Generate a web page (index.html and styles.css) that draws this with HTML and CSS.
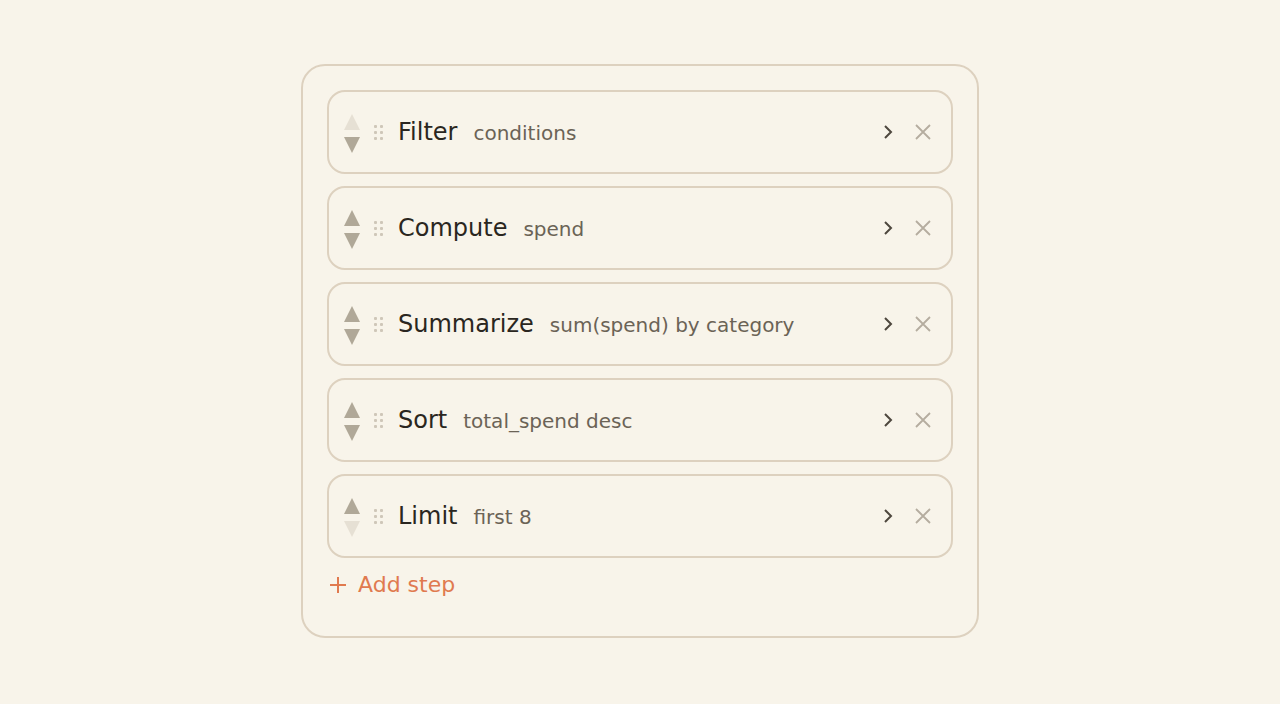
FILE: index.html
```html
<!DOCTYPE html>
<html lang="en">
<head>
    <meta charset="UTF-8">
    <meta name="viewport" content="width=device-width, initial-scale=1.0">
    <title>Pipeline steps</title>
    <link rel="stylesheet" href="styles.css">
</head>
<body>
    <div class="pipeline">
        <div class="step-list">
            <!-- Filter -->
            <div class="step">
                <div class="order">
                    <svg width="16" height="40" viewBox="0 0 16 40">
                        <polygon class="off" points="0,16 8,0 16,16"/>
                        <polygon points="0,23 16,23 8,39"/>
                    </svg>
                </div>
                <svg class="grip" width="9" height="15" viewBox="0 0 9 15">
                    <rect x="0" y="0" width="3" height="3" rx="1"/><rect x="6" y="0" width="3" height="3" rx="1"/>
                    <rect x="0" y="6" width="3" height="3" rx="1"/><rect x="6" y="6" width="3" height="3" rx="1"/>
                    <rect x="0" y="12" width="3" height="3" rx="1"/><rect x="6" y="12" width="3" height="3" rx="1"/>
                </svg>
                <span class="step-name">Filter</span>
                <span class="step-detail">conditions</span>
                <div class="step-actions">
                    <svg class="open" width="10" height="16" viewBox="0 0 10 16"><polyline points="2,2 8,8 2,14"/></svg>
                    <svg class="remove" width="16" height="16" viewBox="0 0 16 16"><path d="M1 1 L15 15 M15 1 L1 15"/></svg>
                </div>
            </div>

            <!-- Compute -->
            <div class="step">
                <div class="order">
                    <svg width="16" height="40" viewBox="0 0 16 40">
                        <polygon points="0,16 8,0 16,16"/>
                        <polygon points="0,23 16,23 8,39"/>
                    </svg>
                </div>
                <svg class="grip" width="9" height="15" viewBox="0 0 9 15">
                    <rect x="0" y="0" width="3" height="3" rx="1"/><rect x="6" y="0" width="3" height="3" rx="1"/>
                    <rect x="0" y="6" width="3" height="3" rx="1"/><rect x="6" y="6" width="3" height="3" rx="1"/>
                    <rect x="0" y="12" width="3" height="3" rx="1"/><rect x="6" y="12" width="3" height="3" rx="1"/>
                </svg>
                <span class="step-name">Compute</span>
                <span class="step-detail">spend</span>
                <div class="step-actions">
                    <svg class="open" width="10" height="16" viewBox="0 0 10 16"><polyline points="2,2 8,8 2,14"/></svg>
                    <svg class="remove" width="16" height="16" viewBox="0 0 16 16"><path d="M1 1 L15 15 M15 1 L1 15"/></svg>
                </div>
            </div>

            <!-- Summarize -->
            <div class="step">
                <div class="order">
                    <svg width="16" height="40" viewBox="0 0 16 40">
                        <polygon points="0,16 8,0 16,16"/>
                        <polygon points="0,23 16,23 8,39"/>
                    </svg>
                </div>
                <svg class="grip" width="9" height="15" viewBox="0 0 9 15">
                    <rect x="0" y="0" width="3" height="3" rx="1"/><rect x="6" y="0" width="3" height="3" rx="1"/>
                    <rect x="0" y="6" width="3" height="3" rx="1"/><rect x="6" y="6" width="3" height="3" rx="1"/>
                    <rect x="0" y="12" width="3" height="3" rx="1"/><rect x="6" y="12" width="3" height="3" rx="1"/>
                </svg>
                <span class="step-name">Summarize</span>
                <span class="step-detail">sum(spend) by category</span>
                <div class="step-actions">
                    <svg class="open" width="10" height="16" viewBox="0 0 10 16"><polyline points="2,2 8,8 2,14"/></svg>
                    <svg class="remove" width="16" height="16" viewBox="0 0 16 16"><path d="M1 1 L15 15 M15 1 L1 15"/></svg>
                </div>
            </div>

            <!-- Sort -->
            <div class="step">
                <div class="order">
                    <svg width="16" height="40" viewBox="0 0 16 40">
                        <polygon points="0,16 8,0 16,16"/>
                        <polygon points="0,23 16,23 8,39"/>
                    </svg>
                </div>
                <svg class="grip" width="9" height="15" viewBox="0 0 9 15">
                    <rect x="0" y="0" width="3" height="3" rx="1"/><rect x="6" y="0" width="3" height="3" rx="1"/>
                    <rect x="0" y="6" width="3" height="3" rx="1"/><rect x="6" y="6" width="3" height="3" rx="1"/>
                    <rect x="0" y="12" width="3" height="3" rx="1"/><rect x="6" y="12" width="3" height="3" rx="1"/>
                </svg>
                <span class="step-name">Sort</span>
                <span class="step-detail">total_spend desc</span>
                <div class="step-actions">
                    <svg class="open" width="10" height="16" viewBox="0 0 10 16"><polyline points="2,2 8,8 2,14"/></svg>
                    <svg class="remove" width="16" height="16" viewBox="0 0 16 16"><path d="M1 1 L15 15 M15 1 L1 15"/></svg>
                </div>
            </div>

            <!-- Limit -->
            <div class="step">
                <div class="order">
                    <svg width="16" height="40" viewBox="0 0 16 40">
                        <polygon points="0,16 8,0 16,16"/>
                        <polygon class="off" points="0,23 16,23 8,39"/>
                    </svg>
                </div>
                <svg class="grip" width="9" height="15" viewBox="0 0 9 15">
                    <rect x="0" y="0" width="3" height="3" rx="1"/><rect x="6" y="0" width="3" height="3" rx="1"/>
                    <rect x="0" y="6" width="3" height="3" rx="1"/><rect x="6" y="6" width="3" height="3" rx="1"/>
                    <rect x="0" y="12" width="3" height="3" rx="1"/><rect x="6" y="12" width="3" height="3" rx="1"/>
                </svg>
                <span class="step-name">Limit</span>
                <span class="step-detail">first 8</span>
                <div class="step-actions">
                    <svg class="open" width="10" height="16" viewBox="0 0 10 16"><polyline points="2,2 8,8 2,14"/></svg>
                    <svg class="remove" width="16" height="16" viewBox="0 0 16 16"><path d="M1 1 L15 15 M15 1 L1 15"/></svg>
                </div>
            </div>
        </div>

        <!-- 新增步驟 -->
        <div class="add-step">
            <svg width="16" height="16" viewBox="0 0 16 16"><path d="M8 0 V16 M0 8 H16"/></svg>
            <span>Add step</span>
        </div>
    </div>
</body>
</html>
```

FILE: styles.css
```css
body {
    margin: 0;
    padding: 0;
    font-family: "DejaVu Sans", "Noto Sans", sans-serif;
    background-color: #f8f4ea;
    display: flex;
    justify-content: center;
    align-items: center;
    height: calc(100vh - 2px);
    overflow: hidden;
}

/* 外框 */
.pipeline {
    width: 626px;
    padding: 24px 24px 38px 24px;
    border: 2px solid #ddd1bf;
    border-radius: 24px;
    display: flex;
    flex-direction: column;
    gap: 14px;
}

.step-list {
    display: flex;
    flex-direction: column;
    gap: 12px;
}

/* 每一個步驟 */
.step {
    height: 80px;
    border: 2px solid #ddd1bf;
    border-radius: 18px;
    display: flex;
    align-items: center;
    padding: 0 20px 0 15px;
}

.order {
    display: flex;
    width: 16px;
    height: 40px;
    margin-top: 3px;
}

.order polygon {
    fill: #b0a898;
}

.order polygon.off {
    fill: #e6e0d4;
}

.grip {
    margin-left: 14px;
    margin-top: 1px;
    fill: #cfc7b9;
}

.step-name {
    margin-left: 15px;
    font-size: 24px;
    color: #2a2620;
}

.step-detail {
    margin-left: 16px;
    font-size: 20px;
    color: #6b6356;
    margin-top: 2px;
}

.step-actions {
    margin-left: auto;
    display: flex;
    align-items: center;
    gap: 22px;
}

.open polyline {
    fill: none;
    stroke: #4e473e;
    stroke-width: 2;
}

.remove path {
    fill: none;
    stroke: #b5ad9f;
    stroke-width: 1.8;
}

/* 新增步驟按鈕 */
.add-step {
    display: flex;
    align-items: center;
    gap: 12px;
    padding-left: 3px;
    color: #e07a4f;
    font-size: 22px;
    line-height: 26px;
    cursor: pointer;
}

.add-step svg path {
    stroke: #e07a4f;
    stroke-width: 2;
}
```
